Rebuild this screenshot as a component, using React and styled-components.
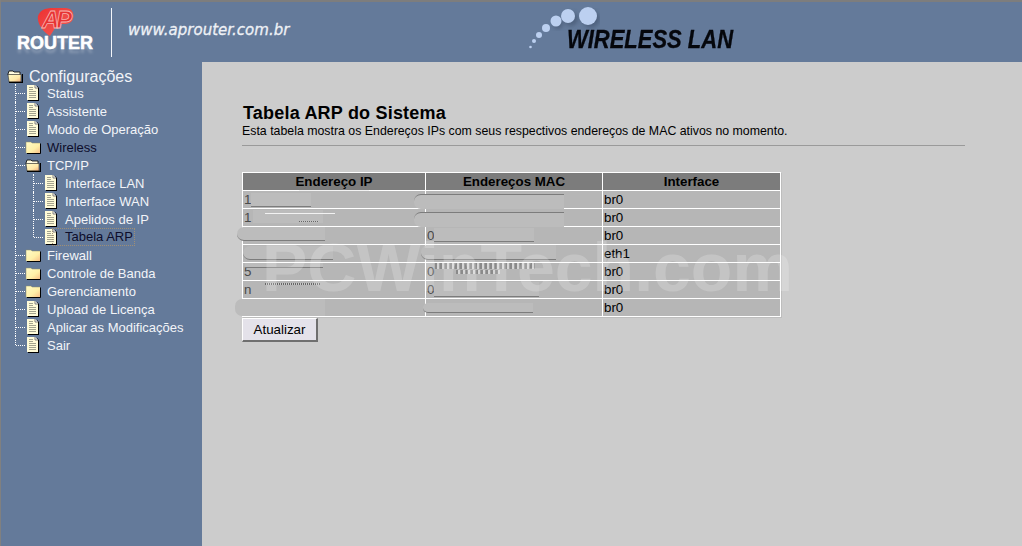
import React from "react"
import styled, { createGlobalStyle } from "styled-components"

const menu = [
  { label: "Status", icon: "page" },
  { label: "Assistente", icon: "page" },
  { label: "Modo de Operação", icon: "page" },
  { label: "Wireless", icon: "folder", dark: true },
  { label: "TCP/IP", icon: "open" },
  { label: "Interface LAN", icon: "page", sub: true },
  { label: "Interface WAN", icon: "page", sub: true },
  { label: "Apelidos de IP", icon: "page", sub: true },
  { label: "Tabela ARP", icon: "page", sub: true, last: true, dark: true, active: true },
  { label: "Firewall", icon: "folder" },
  { label: "Controle de Banda", icon: "folder" },
  { label: "Gerenciamento", icon: "folder" },
  { label: "Upload de Licença", icon: "page" },
  { label: "Aplicar as Modificações", icon: "page" },
  { label: "Sair", icon: "page", last: true },
]

// smudges hide the addresses in the screenshot, x/y are relative to the cell
const rows = [
  {
    name: "br0",
    ip: "1",
    mac: "",
    ipMarks: [
      { x: 8, y: 2, w: 60, h: 14, edge: "bottom" },
      { x: 56, y: -1, w: 70, h: 2, edge: "white" },
    ],
    macMarks: [{ x: -12, y: 3, w: 150, h: 15, edge: "top", round: true }],
  },
  {
    name: "br0",
    ip: "1",
    mac: "",
    ipMarks: [
      { x: 10, y: 1, w: 70, h: 13, edge: "none" },
      { x: 22, y: 4, w: 70, h: 2, edge: "white" },
      { x: 56, y: 12, w: 20, h: 1, edge: "dots" },
    ],
    macMarks: [{ x: -12, y: 3, w: 150, h: 15, edge: "top", round: true }],
  },
  {
    name: "br0",
    ip: "",
    mac: "0",
    ipMarks: [{ x: -6, y: 0, w: 88, h: 14, edge: "bottom", round: true }],
    macMarks: [{ x: 8, y: 1, w: 100, h: 14, edge: "bottom" }],
  },
  {
    name: "eth1",
    ip: "",
    mac: "",
    ipMarks: [{ x: 0, y: 1, w: 90, h: 14, edge: "bottom", round: true }],
    macMarks: [{ x: -5, y: 0, w: 135, h: 15, edge: "bottom", round: true }],
  },
  {
    name: "br0",
    ip: "5",
    mac: "0",
    ipMarks: [{ x: 2, y: 0, w: 78, h: 5, edge: "bottom" }],
    macMarks: [
      { x: 9, y: 0, w: 100, h: 6, edge: "noise" },
      { x: 30, y: 7, w: 44, h: 4, edge: "noise" },
    ],
  },
  {
    name: "br0",
    ip: "n",
    mac: "0",
    ipMarks: [{ x: 22, y: 2, w: 55, h: 2, edge: "dots" }],
    macMarks: [{ x: 8, y: 1, w: 105, h: 15, edge: "bottom" }],
  },
  {
    name: "br0",
    ip: "",
    mac: "",
    ipMarks: [{ x: -8, y: 0, w: 90, h: 17, edge: "none", round: true }],
    macMarks: [{ x: -3, y: 4, w: 110, h: 10, edge: "bottom", round: true }],
  },
]

const PageIcon = () => (
  <svg width="14" height="16" viewBox="0 0 14 16">
    <path d="M2 1h9l2 2v13H2z" fill="#000" />
    <path d="M1 0h8l3 3v12H1z" fill="#fffbd8" />
    <path d="M3 2.5h4M3 4.5h4M3 6.5h7M3 8.5h7M3 10.5h7M3 12.5h7" stroke="#a3a38e" strokeWidth="1" />
    <path d="M9 0v3h3" fill="#fff" stroke="#666" strokeWidth="0.8" />
  </svg>
)

const FolderIcon = () => (
  <svg width="16" height="13" viewBox="0 0 16 13">
    <defs>
      <linearGradient id="closedFill" x1="0" y1="0" x2="1" y2="1">
        <stop offset="0" stopColor="#fffbc8" />
        <stop offset="0.6" stopColor="#fff0a8" />
        <stop offset="1" stopColor="#f8c088" />
      </linearGradient>
    </defs>
    <path d="M2 12.5h13.5V2.5" fill="none" stroke="#000" strokeWidth="1" />
    <path d="M1 1h5l1 1h8v10H1z" fill="url(#closedFill)" />
    <path d="M1 12V1h5l1 1h8" fill="none" stroke="#8d8d6a" strokeWidth="0.5" />
  </svg>
)

const OpenFolderIcon = () => (
  <svg width="16" height="13" viewBox="0 0 16 13">
    <defs>
      <linearGradient id="openFill" x1="0" y1="0" x2="1" y2="1">
        <stop offset="0" stopColor="#fffbc8" />
        <stop offset="0.6" stopColor="#ffe8a8" />
        <stop offset="1" stopColor="#f0a878" />
      </linearGradient>
    </defs>
    <path d="M1 4l1-3h4l1 1h6v3H1z" fill="#fffbe0" stroke="#000" strokeWidth="0.8" />
    <path d="M1 4.5h13v7.5H2z" fill="url(#openFill)" stroke="#333" strokeWidth="0.6" />
    <path d="M15.5 4v8.5H2" fill="none" stroke="#000" strokeWidth="1.4" />
  </svg>
)

const icons = { page: PageIcon, folder: FolderIcon, open: OpenFolderIcon }

const App = () => (
  <Page>
    <GlobalStyle />
    <Header>
      <Logo>
        <svg width="40" height="30" viewBox="0 0 40 30">
          <defs>
            <linearGradient id="blobFill" x1="0" y1="0" x2="1" y2="1">
              <stop offset="0" stopColor="#ee3030" />
              <stop offset="1" stopColor="#f0605a" />
            </linearGradient>
          </defs>
          <path
            d="M9 1C17-1 29-1 34 1c4 2 4 9 2 12-3 4-9 3-14 3-3 3-5 8-8 12C9 25 3 19 2 12 1 7 4 3 9 1z"
            fill="url(#blobFill)"
          />
          <AP x="6" y="20">
            AP
          </AP>
        </svg>
        <LogoWord>ROUTER</LogoWord>
      </Logo>
      <Divider />
      <Site>www.aprouter.com.br</Site>
      <Brand>
        <svg width="72" height="50" viewBox="0 0 72 50">
          <defs>
            <filter id="soft">
              <feGaussianBlur stdDeviation="2" />
            </filter>
          </defs>
          <g fill="#3f516c" opacity="0.6" filter="url(#soft)">
            <circle cx="63" cy="17" r="9" />
            <circle cx="43" cy="17" r="7" />
            <circle cx="30" cy="22" r="5" />
          </g>
          <g fill="#bcd0f0">
            <circle cx="60" cy="14" r="9" />
            <circle cx="40" cy="14" r="7" />
            <circle cx="28" cy="19" r="5.5" />
            <circle cx="18" cy="26" r="4" />
            <circle cx="11" cy="33" r="3" />
            <circle cx="6" cy="39" r="2" />
            <circle cx="2.5" cy="45" r="1.3" />
          </g>
        </svg>
        <BrandWord>WIRELESS LAN</BrandWord>
      </Brand>
    </Header>
    <Body>
      <Sidebar>
        <RootRow>
          <RootIcon>
            <OpenFolderIcon />
          </RootIcon>
          <RootLabel>Configurações</RootLabel>
        </RootRow>
        {menu.map((item) => {
          const Icon = icons[item.icon]
          return (
            <TreeRow key={item.label}>
              {item.sub ? <Pipe /> : null}
              <Elbow $last={item.last} />
              <IconSlot>
                <Icon />
              </IconSlot>
              <TreeLabel $dark={item.dark} $active={item.active}>
                {item.label}
              </TreeLabel>
            </TreeRow>
          )
        })}
      </Sidebar>
      <Main>
        <Title>Tabela ARP do Sistema</Title>
        <Intro>
          Esta tabela mostra os Endereços IPs com seus respectivos endereços de
          MAC ativos no momento.
        </Intro>
        <Rule />
        <Table>
          <thead>
            <tr>
              <HeadCell $width={183}>Endereço IP</HeadCell>
              <HeadCell $width={177}>Endereços MAC</HeadCell>
              <HeadCell $width={178}>Interface</HeadCell>
            </tr>
          </thead>
          <tbody>
            {rows.map((row, i) => (
              <tr key={i}>
                <Cell>
                  <Fragment>{row.ip}</Fragment>
                  {row.ipMarks.map((m, j) => (
                    <Smudge key={j} $x={m.x} $y={m.y} $w={m.w} $h={m.h} $edge={m.edge} $round={m.round} />
                  ))}
                </Cell>
                <Cell>
                  <Fragment>{row.mac}</Fragment>
                  {row.macMarks.map((m, j) => (
                    <Smudge key={j} $x={m.x} $y={m.y} $w={m.w} $h={m.h} $edge={m.edge} $round={m.round} />
                  ))}
                </Cell>
                <Cell>{row.name}</Cell>
              </tr>
            ))}
          </tbody>
        </Table>
        <Button>Atualizar</Button>
        <Watermark>PCWinTech.com</Watermark>
      </Main>
    </Body>
  </Page>
)

const GlobalStyle = createGlobalStyle`
  html, body {
    margin: 0;
    padding: 0;
    background: #cccccc;
  }
  body {
    font-family: "Liberation Sans", Arial, sans-serif;
  }
`

const Page = styled.div`
  width: 1022px;
  height: 546px;
  overflow: hidden;
  display: flex;
  flex-direction: column;
  border-left: 1px solid #808080;
  box-sizing: border-box;
`

const Header = styled.header`
  height: 62px;
  flex: none;
  box-sizing: border-box;
  border-top: 2px solid #7d7d7d;
  background: #647a9a;
  display: flex;
  align-items: flex-start;
`

const Logo = styled.div`
  width: 76px;
  margin: 6px 0 0 16px;
  display: flex;
  flex-direction: column;
  align-items: center;

  svg {
    margin-left: 2px;
    margin-bottom: -3px;
  }
`

const AP = styled.text`
  font-family: "Liberation Sans", Arial, sans-serif;
  font-size: 24px;
  font-weight: bold;
  font-style: italic;
  fill: #e63232;
  stroke: #f9b4b0;
  stroke-width: 0.8px;
  letter-spacing: -3px;
`

const LogoWord = styled.div`
  font-size: 18px;
  line-height: 17px;
  font-weight: bold;
  color: #ffffff;
  -webkit-text-stroke: 0.5px #ffffff;
  text-shadow: 0 4px 3px rgba(255, 255, 255, 0.25);
`

const Divider = styled.div`
  width: 1px;
  height: 49px;
  margin: 6px 0 0 18px;
  background: #f4f6fa;
`

const Site = styled.div`
  margin: 19px 0 0 16px;
  width: 200px;
  font-family: "DejaVu Sans", sans-serif;
  font-size: 15px;
  line-height: 18px;
  font-style: italic;
  color: #eef1f6;
  -webkit-text-stroke: 0.3px #eef1f6;
  white-space: nowrap;
`

const Brand = styled.div`
  margin-left: 200px;
  display: flex;
  align-items: flex-start;
`

const BrandWord = styled.div`
  margin: 22px 0 0 -33px;
  font-size: 26px;
  line-height: 30px;
  font-weight: bold;
  font-style: italic;
  color: #05070c;
  -webkit-text-stroke: 0.3px #05070c;
  white-space: nowrap;
  transform: scaleX(0.845);
  transform-origin: left center;
`

const Body = styled.div`
  flex: 1;
  display: flex;
  min-height: 0;
`

const Sidebar = styled.nav`
  width: 201px;
  flex: none;
  box-sizing: border-box;
  padding: 4px 0 0 6px;
  background: #647a9a;
`

const RootRow = styled.div`
  height: 18px;
  display: flex;
  align-items: center;
`

const TreeRow = styled.div`
  height: 18px;
  display: flex;
  align-items: center;
`

const Pipe = styled.span`
  width: 18px;
  height: 18px;
  flex: none;
  position: relative;

  &::before {
    content: "";
    position: absolute;
    left: 8px;
    top: 0;
    bottom: 0;
    border-left: 1px dotted #ffffff;
  }
`

const Elbow = styled(Pipe)`
  &::before {
    bottom: ${(p) => (p.$last ? "9px" : "0")};
  }

  &::after {
    content: "";
    position: absolute;
    left: 9px;
    right: 0;
    top: 9px;
    border-top: 1px dotted #ffffff;
  }
`

const IconSlot = styled.span`
  width: 16px;
  height: 16px;
  margin-right: 6px;
  flex: none;
  display: flex;
  align-items: center;
  justify-content: center;
`

const RootIcon = styled(IconSlot)`
  margin-top: 2px;
`

const RootLabel = styled.span`
  margin-top: 4px;
  font-size: 16px;
  line-height: 18px;
  color: #f2f4f8;
  white-space: nowrap;
`

const TreeLabel = styled.span`
  font-size: 13px;
  line-height: 15px;
  color: ${(p) => (p.$dark ? "#0d0d2a" : "#f2f4f8")};
  white-space: nowrap;
  ${(p) =>
    p.$active
      ? "padding: 0 1px 1px 12px; margin-left: -12px; outline: 1px dotted #a08f75;"
      : ""}
`

const Main = styled.main`
  flex: 1;
  position: relative;
  box-sizing: border-box;
  padding: 40px 0 0 40px;
  background: #cccccc;
  color: #000000;
`

const Title = styled.h1`
  margin: 0 0 0 1px;
  font-size: 18px;
  line-height: 22px;
  font-weight: bold;
  letter-spacing: 0.2px;
`

const Intro = styled.p`
  margin: 0;
  font-size: 12.35px;
  line-height: 14px;
`

const Rule = styled.hr`
  width: 723px;
  height: 1px;
  margin: 7px 0 26px;
  border: 0;
  background: #9a9a9a;
`

const Table = styled.table`
  width: 539px;
  table-layout: fixed;
  border-collapse: collapse;
  font-size: 13.33px;
  box-shadow: 1px 1px 0 #bdbdbd;
`

const HeadCell = styled.th`
  width: ${(p) => p.$width}px;
  height: 18px;
  box-sizing: border-box;
  padding: 0;
  border: 1px solid #ffffff;
  background: #7c7c7c;
  color: #000000;
  font-size: 13.33px;
  font-weight: bold;
  line-height: 16px;
  text-align: center;
`

const Cell = styled.td`
  height: 18px;
  box-sizing: border-box;
  padding: 0 1px;
  position: relative;
  border: 1px solid #ffffff;
  background: #b6b6b6;
  line-height: 16px;
`

const Fragment = styled.span`
  color: #4a4a4a;
`

const edgeStyles = {
  none: "",
  top: "border-top: 1px solid #7c7c7c;",
  bottom: "border-bottom: 1px solid #7c7c7c;",
  white: "background: #f2f2f2; height: 1px;",
  dots: "background: repeating-linear-gradient(90deg, #666 0 1px, #c8c8c8 1px 2px);",
  noise: "background: repeating-linear-gradient(90deg, #8a8a8a 0 2px, #d6d6d6 2px 4px, #a0a0a0 4px 5px);",
}

const Smudge = styled.span`
  position: absolute;
  left: ${(p) => p.$x}px;
  top: ${(p) => p.$y}px;
  width: ${(p) => p.$w}px;
  height: ${(p) => p.$h}px;
  box-sizing: border-box;
  background: #bcbcbc;
  border-radius: ${(p) => (p.$round ? "7px 0 0 7px" : "0")};
  filter: blur(0.5px);
  ${(p) => edgeStyles[p.$edge]}
`

const Button = styled.button`
  display: block;
  width: 76px;
  height: 24px;
  margin-top: 1px;
  padding: 0;
  box-sizing: border-box;
  border: 1px solid;
  border-color: #ffffff #6f6f6f #6f6f6f #ffffff;
  border-right-width: 2px;
  border-bottom-width: 2px;
  background: #e4e2ea;
  color: #000000;
  font-family: "Liberation Sans", Arial, sans-serif;
  font-size: 13.33px;
`

const Watermark = styled.div`
  position: absolute;
  left: 60px;
  top: 166px;
  font-size: 68px;
  line-height: 78px;
  font-weight: bold;
  color: rgba(255, 255, 255, 0.2);
  white-space: nowrap;
  pointer-events: none;
`

export default App
